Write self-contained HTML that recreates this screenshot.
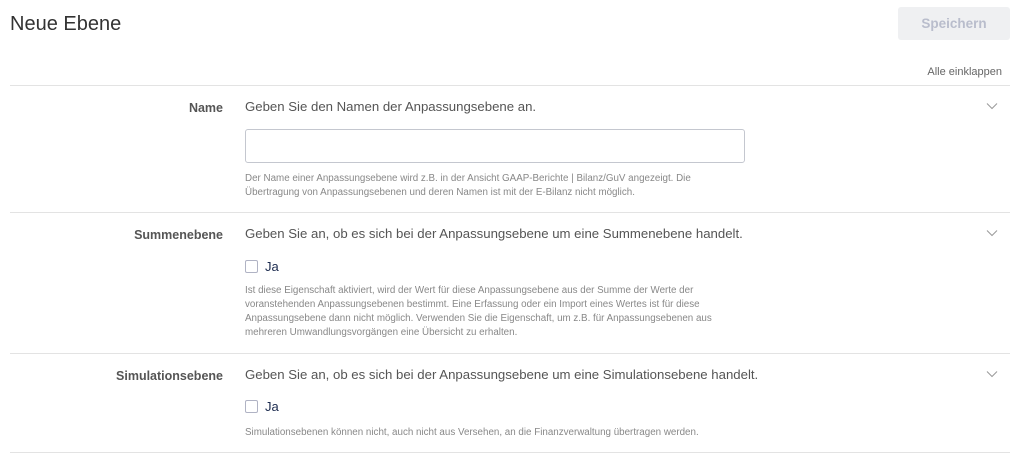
<!DOCTYPE html>
<html><head><meta charset="utf-8"><style>
body{margin:0;width:1036px;height:461px;background:#fff;font-family:"Liberation Sans",sans-serif;position:relative;overflow:hidden}
.a{position:absolute;white-space:nowrap}
.t{left:10px;top:13px;font-size:20px;color:#333}
.btn{left:898px;top:7px;width:112px;height:33px;background:#eff0f2;border-radius:3px;color:#b9bdcc;font-weight:bold;font-size:13.5px;text-align:center;line-height:33px}
.hr{position:absolute;left:10px;width:1000px;height:1px;background:#e3e3e3}
.lbl{font-weight:bold;font-size:12.5px;color:#555;right:813px;text-align:right}
.q{left:245px;font-size:13.2px;color:#555}
.h{left:245px;font-size:9.8px;color:#888;line-height:14px}
.cb{position:absolute;left:245px;width:13px;height:13px;border:1px solid #b0b3c4;border-radius:2px;box-sizing:border-box}
.ja{left:265px;font-size:13px;color:#1b2a4e}
.chev{position:absolute;left:986px;width:12px;height:8px}
</style></head><body>
<div class="a t">Neue Ebene</div>
<div class="a btn">Speichern</div>
<div class="a" style="right:34px;top:66px;font-size:11px;color:#666">Alle einklappen</div>
<div class="hr" style="top:85px"></div>

<div class="a lbl" style="top:101px">Name</div>
<div class="a q" style="top:99px">Geben Sie den Namen der Anpassungsebene an.</div>
<svg class="chev" style="top:102px" viewBox="0 0 12 8"><path d="M1 1.5l5 5 5-5" fill="none" stroke="#999" stroke-width="1"/></svg>
<div class="a" style="left:245px;top:129px;width:500px;height:34px;border:1px solid #c4c7cf;border-radius:3px;box-sizing:border-box"></div>
<div class="a h" style="top:172px">Der Name einer Anpassungsebene wird z.B. in der Ansicht GAAP-Berichte | Bilanz/GuV angezeigt. Die<br>Übertragung von Anpassungsebenen und deren Namen ist mit der E-Bilanz nicht möglich.</div>
<div class="hr" style="top:212px"></div>

<div class="a lbl" style="top:228px">Summenebene</div>
<div class="a q" style="top:226px">Geben Sie an, ob es sich bei der Anpassungsebene um eine Summenebene handelt.</div>
<svg class="chev" style="top:229px" viewBox="0 0 12 8"><path d="M1 1.5l5 5 5-5" fill="none" stroke="#999" stroke-width="1"/></svg>
<div class="cb" style="top:260px"></div>
<div class="a ja" style="top:259px">Ja</div>
<div class="a h" style="top:284px">Ist diese Eigenschaft aktiviert, wird der Wert für diese Anpassungsebene aus der Summe der Werte der<br>voranstehenden Anpassungsebenen bestimmt. Eine Erfassung oder ein Import eines Wertes ist für diese<br>Anpassungsebene dann nicht möglich. Verwenden Sie die Eigenschaft, um z.B. für Anpassungsebenen aus<br>mehreren Umwandlungsvorgängen eine Übersicht zu erhalten.</div>
<div class="hr" style="top:353px"></div>

<div class="a lbl" style="top:369px">Simulationsebene</div>
<div class="a q" style="top:367px">Geben Sie an, ob es sich bei der Anpassungsebene um eine Simulationsebene handelt.</div>
<svg class="chev" style="top:370px" viewBox="0 0 12 8"><path d="M1 1.5l5 5 5-5" fill="none" stroke="#999" stroke-width="1"/></svg>
<div class="cb" style="top:400px"></div>
<div class="a ja" style="top:399px">Ja</div>
<div class="a h" style="top:426px">Simulationsebenen können nicht, auch nicht aus Versehen, an die Finanzverwaltung übertragen werden.</div>
<div class="hr" style="top:452px"></div>
</body></html>
